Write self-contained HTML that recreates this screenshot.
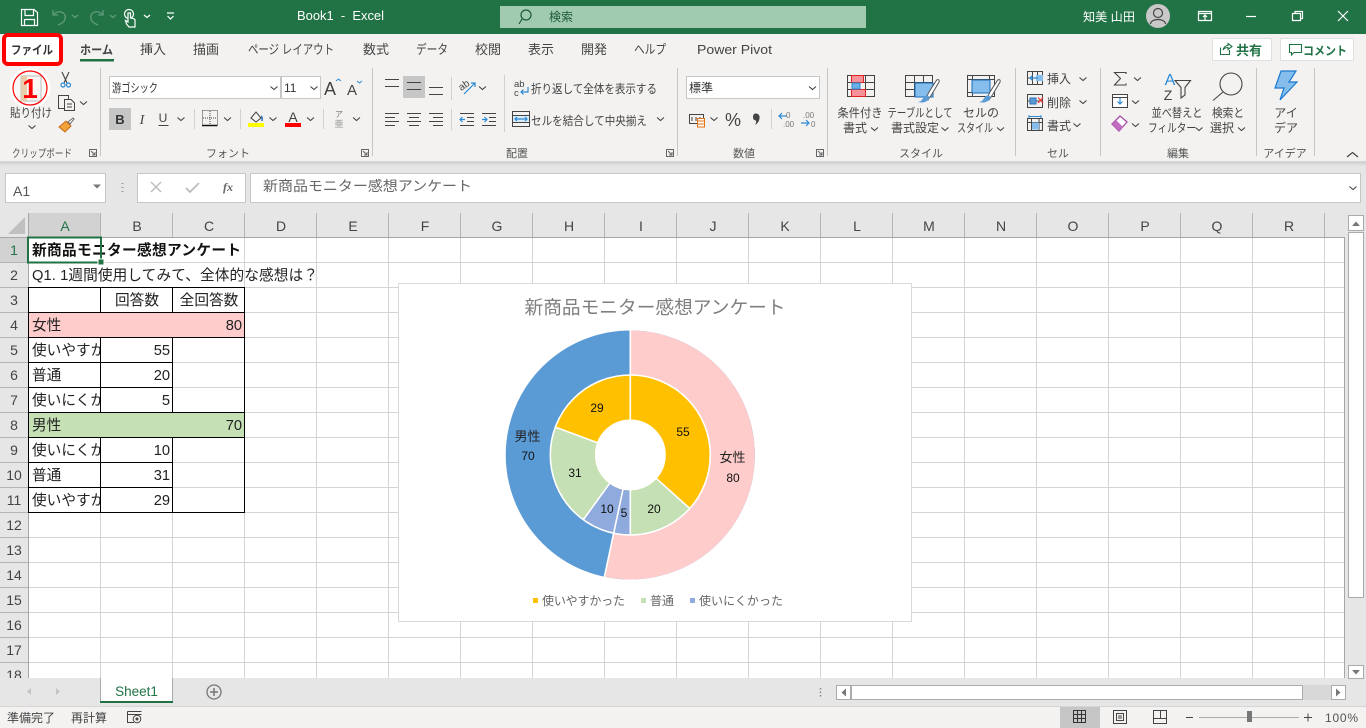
<!DOCTYPE html>
<html lang="ja"><head><meta charset="utf-8"><title>Book1 - Excel</title>
<style>
html,body{margin:0;padding:0;width:1366px;height:728px;overflow:hidden;background:#e6e6e6}
svg{display:block;position:absolute;left:0;top:0}
text{font-family:"Liberation Sans","Noto Sans CJK JP",sans-serif;font-size:12px;fill:#444}
.m{text-anchor:middle}
.c{font-size:14.67px;fill:#222}
.r{font-size:14.67px;fill:#222;text-anchor:end}
.h{font-size:14px;fill:#444;text-anchor:middle}
.g{font-size:11px;fill:#555;text-anchor:middle}
.w{fill:#fff}
.d{font-size:12px;fill:#111;text-anchor:middle}
.e{font-size:13px;fill:#222;text-anchor:middle}
.l{font-size:12px;fill:#666}
.t{font-size:13px;fill:#444}
.ln{fill:none;stroke:#444;stroke-width:1}
.ch{fill:none;stroke:#444;stroke-width:1.1}
.b{fill:none;stroke:#2b8ad6;stroke-width:1.2}
</style></head><body>
<svg width="1366" height="728" viewBox="0 0 1366 728" xmlns="http://www.w3.org/2000/svg">
<defs>
<clipPath id="ca"><rect x="29" y="338" width="71" height="175"/></clipPath>
<clipPath id="cg"><rect x="0" y="213" width="1345" height="465"/></clipPath>
<path id="v" d="M-3.5 -1.5L0 1.5L3.5 -1.5" fill="none" stroke="#444" stroke-width="1.1"/>
</defs>

<!-- backgrounds -->
<rect width="1366" height="728" fill="#e6e6e6"/>
<rect width="1366" height="34" fill="#217346"/>
<rect y="34" width="1366" height="127" fill="#f3f2f1"/>
<rect y="161" width="1366" height="3" fill="#d4d4d4"/>
<rect y="164" width="1366" height="2" fill="#e0e0e0"/>

<!-- QAT -->
<g fill="none" stroke="#fff" stroke-width="1.2">
<path d="M21.5 9.5H34L37.5 12.5V25.500H21.500Z"/><path d="M25 9.500V15.500H33.500V9.500M24.500 25V19.500H34.500V25"/>
</g>
<g fill="none" stroke="#5f9a7b" stroke-width="1.3">
<path d="M53 10V15H58M53 15C58 9 67 12 65 19C64 23 60 24 58 25"/>
<path d="M103 10V15H98M103 15C98 9 89 12 91 19C92 23 96 24 98 25"/>
<path d="M72 15L75 17.500L78 15M110 15L113 17.500L116 15"/>
</g>
<g fill="none" stroke="#fff" stroke-width="1.2">
<circle cx="129" cy="14" r="4.500"/><path d="M128 13V22L125.500 20.500L126.500 24L129 27H135V20C135 18.500 131 18 130.500 18V13Z" fill="#217346"/>
<path d="M144 15L147 17.500L150 15M167 13H174M167.500 16L170.500 19L173.500 16"/>
</g>
<text x="297" y="20" class="w" textLength="87" lengthAdjust="spacingAndGlyphs" style="font-size:13px">Book1&#160;&#160;-&#160;&#160;Excel</text>
<rect x="500" y="6" width="366" height="22" fill="#a0cbb0"/>
<g fill="none" stroke="#1c5c38" stroke-width="1.2"><circle cx="526" cy="15" r="5"/><path d="M522 19L519 24"/></g>
<text x="549" y="21" style="fill:#1e5a39">検索</text>
<text x="1083" y="21" class="w" textLength="52" lengthAdjust="spacingAndGlyphs">知美 山田</text>
<circle cx="1158" cy="16" r="12" fill="#c8c8c8"/>
<g fill="none" stroke="#444" stroke-width="1.200"><circle cx="1158" cy="13" r="4.500"/><path d="M1150.500 24C1151 18 1165 18 1165.500 24"/></g>
<g fill="none" stroke="#fff" stroke-width="1.200">
<path d="M1198.500 11.500H1211.500V20.500H1198.500ZM1198.500 13.500H1211.500M1205 20V15M1203 17L1205 15L1207 17"/>
<path d="M1246 16.500H1256"/>
<path d="M1292.500 13.500H1300.500V20.500H1292.500ZM1295 13.500V11.500H1302.500V18.500H1300.500"/>
<path d="M1338 11L1348 21M1348 11L1338 21"/>
</g>

<!-- file tab -->
<rect x="4" y="35" width="57" height="29" rx="4" fill="#fff" stroke="#f00" stroke-width="4"/>
<text x="11" y="54" style="font-weight:bold;fill:#333" textLength="42" lengthAdjust="spacingAndGlyphs">ファイル</text>
<!-- tabs -->
<text x="80" y="54" style="font-weight:bold;fill:#444" textLength="33" lengthAdjust="spacingAndGlyphs">ホーム</text>
<rect x="80" y="59" width="34" height="2.500" fill="#217346"/>
<text x="140" y="54" class="t" textLength="26" lengthAdjust="spacingAndGlyphs">挿入</text>
<text x="193" y="54" class="t" textLength="26" lengthAdjust="spacingAndGlyphs">描画</text>
<text x="248" y="54" class="t" textLength="86" lengthAdjust="spacingAndGlyphs">ページ レイアウト</text>
<text x="363" y="54" class="t" textLength="26" lengthAdjust="spacingAndGlyphs">数式</text>
<text x="416" y="54" class="t" textLength="32" lengthAdjust="spacingAndGlyphs">データ</text>
<text x="475" y="54" class="t" textLength="26" lengthAdjust="spacingAndGlyphs">校閲</text>
<text x="528" y="54" class="t" textLength="26" lengthAdjust="spacingAndGlyphs">表示</text>
<text x="581" y="54" class="t" textLength="26" lengthAdjust="spacingAndGlyphs">開発</text>
<text x="634" y="54" class="t" textLength="32" lengthAdjust="spacingAndGlyphs">ヘルプ</text>
<text x="697" y="54" class="t" textLength="75" lengthAdjust="spacingAndGlyphs">Power Pivot</text>
<!-- share/comment -->
<rect x="1212.500" y="38.500" width="59" height="22" rx="1" fill="#fff" stroke="#e1dfdd"/>
<rect x="1280.500" y="38.500" width="73" height="22" rx="1" fill="#fff" stroke="#e1dfdd"/>
<g fill="none" stroke="#217346" stroke-width="1.100">
<path d="M1220.500 47.500V54.500H1229.500V50M1223 50C1224 46.500 1226 45.500 1228 45.500V43.500L1232 46.500L1228 49.500V47.500C1226 47.500 1224 48.500 1223 50Z"/>
<path d="M1289.500 44.500H1301.500V52.500H1294L1291.500 55V52.500H1289.500Z"/>
</g>
<text x="1236" y="55" style="font-weight:bold;fill:#217346;font-size:13px" textLength="26" lengthAdjust="spacingAndGlyphs">共有</text>
<text x="1303" y="55" style="font-weight:bold;fill:#217346" textLength="44" lengthAdjust="spacingAndGlyphs">コメント</text>

<!-- ribbon separators -->
<path d="M100.500 68V156M372.500 68V156M677.500 68V156M827.500 68V156M1015.500 68V156M1100.500 68V156M1256.500 68V156M1314.500 68V156" stroke="#c8c6c4" stroke-width="1"/>
<path d="M194.500 109V129M240.500 109V129M323.500 109V129M451.500 77V100M451.500 109V130M504.500 75V132M771.500 109V129" stroke="#d2d0ce"/>
<!-- group labels -->
<text x="42" y="157" class="g" textLength="60" lengthAdjust="spacingAndGlyphs">クリップボード</text>
<text x="228" y="157" class="g">フォント</text>
<text x="517" y="157" class="g">配置</text>
<text x="744" y="157" class="g">数値</text>
<text x="921" y="157" class="g">スタイル</text>
<text x="1058" y="157" class="g">セル</text>
<text x="1178" y="157" class="g">編集</text>
<text x="1285" y="157" class="g">アイデア</text>
<g fill="none" stroke="#666"><path d="M89.500 149.500H96.500V156.500H89.500ZM91 151L95 155M95 152V155H92"/>
<path d="M361.500 149.500H368.500V156.500H361.500ZM363 151L367 155M367 152V155H364"/>
<path d="M666.500 149.500H673.500V156.500H666.500ZM668 151L672 155M672 152V155H669"/>
<path d="M816.500 149.500H823.500V156.500H816.500ZM818 151L822 155M822 152V155H819"/></g>
<path d="M1347 157L1352.500 152.500L1358 157" fill="none" stroke="#444" stroke-width="1.200"/>

<!-- clipboard -->
<rect x="21" y="76" width="20" height="25" fill="#f7f3ec" stroke="#888"/>
<rect x="21" y="76" width="6" height="25" fill="#d8a566"/>
<circle cx="30" cy="88" r="17" fill="#fff" opacity=".45"/>
<circle cx="30" cy="88" r="18.500" fill="none" stroke="#fff" stroke-width="3.500"/>
<circle cx="30" cy="88" r="17" fill="none" stroke="#f00" stroke-width="1.200"/>
<text x="30" y="98" class="m" style="font-size:28px;font-weight:bold;fill:#f00">1</text>
<text x="31" y="117" class="m" textLength="42" lengthAdjust="spacingAndGlyphs">貼り付け</text>
<use href="#v" x="32" y="127"/>
<g fill="none" stroke="#444" stroke-width="1.100"><path d="M62 72L67 83M69 72L64 83"/></g>
<circle cx="63" cy="85" r="2" fill="none" stroke="#2b8ad6" stroke-width="1.200"/><circle cx="68.500" cy="85" r="2" fill="none" stroke="#2b8ad6" stroke-width="1.200"/>
<g class="ln" fill="none" stroke="#444"><path d="M64.500 108.500H58.500V95.500H68.500V99"/><path d="M64.500 99.500H71L74.500 103V110.500H64.500Z" fill="#f3f2f1"/><path d="M67 104H72M67 107H72"/></g>
<use href="#v" x="83.500" y="103"/>
<path d="M59 127L66 121L71 126L65 132Z" fill="#f2a33a" stroke="#c8691a"/><path d="M68 122L73 118L74 119L70 124Z" fill="#fff" stroke="#666"/>

<!-- font -->
<rect x="109.500" y="76.500" width="171" height="22" fill="#fff" stroke="#c6c6c6"/>
<rect x="281.500" y="76.500" width="39" height="22" fill="#fff" stroke="#c6c6c6"/>
<text x="112" y="92" style="fill:#333" textLength="46" lengthAdjust="spacingAndGlyphs">游ゴシック</text>
<text x="284" y="92" style="fill:#333">11</text>
<use href="#v" x="274" y="88"/><use href="#v" x="314" y="88"/>
<text x="324" y="95" style="font-size:18px;fill:#444">A</text>
<path d="M336 81L338.500 79L341 81" fill="none" stroke="#2b8ad6"/>
<text x="347" y="95" style="font-size:15px;fill:#444">A</text>
<path d="M357 81L359.500 83L362 81" fill="none" stroke="#2b8ad6"/>
<rect x="109" y="108" width="22" height="22" fill="#c6c6c6"/>
<text x="120" y="124" class="m" style="font-weight:bold;font-size:13px;fill:#333">B</text>
<text x="142" y="124" class="m" style="font-style:italic;font-family:'Liberation Serif',serif;font-size:14px">I</text>
<text x="163" y="122" class="m" style="font-size:12px">U</text>
<path d="M158.500 125.500H168.500" stroke="#444"/>
<use href="#v" x="181" y="119"/>
<path d="M202.500 110.500H217.500V125.500M202.500 110.500V125.500M210 111V125M203 118H217" fill="none" stroke="#444" stroke-dasharray="1 1"/>
<path d="M202 125.500H217.500" stroke="#111" stroke-width="1.500"/>
<use href="#v" x="227.500" y="119"/>
<path d="M251 118L256 112L261 118L256 122Z" fill="none" stroke="#444"/><path d="M261 116C263 117 262 120 262 121" stroke="#2b6fb5" stroke-width="1.500" fill="none"/>
<rect x="248" y="123" width="16" height="4" fill="#ff0"/>
<use href="#v" x="273" y="119"/>
<text x="293" y="122" class="m" style="font-size:14px">A</text>
<rect x="285" y="123" width="16" height="4" fill="#f00"/>
<use href="#v" x="310.500" y="119"/>
<text x="339" y="117" class="m" style="font-size:8px;fill:#777">ア</text>
<text x="339" y="127" class="m" style="font-size:9px;fill:#999">亜</text>
<use href="#v" x="356.500" y="119"/>

<!-- alignment -->
<rect x="403" y="76" width="22" height="22" fill="#c6c6c6"/>
<path d="M385 79.500H399M385 86.500H399M407 82.500H421M407 89.500H421M429 87.500H443M429 94.500H443M385 113.500H399M385 117.500H395M385 121.500H399M385 125.500H395M407 113.500H421M409 117.500H419M407 121.500H421M409 125.500H419M429 113.500H443M433 117.500H443M429 121.500H443M433 125.500H443" stroke="#444" fill="none"/>
<text x="459" y="88" transform="rotate(-35 465 86)" style="font-size:10px">ab</text>
<path d="M464 94L475 83M471 83H475V87" class="b"/>
<use href="#v" x="482.500" y="88"/>
<path d="M460 113.500H474M460 125.500H474M467 117.500H474M467 121.500H474" stroke="#444"/><path d="M465 119.500H460M462.500 117L460 119.500L462.500 122" class="b"/>
<path d="M482 113.500H496M482 125.500H496M489 117.500H496M489 121.500H496" stroke="#444"/><path d="M482 119.500H487M484.500 117L487 119.500L484.500 122" class="b"/>
<text x="514" y="87" style="font-size:9.500px">ab</text><text x="514" y="96" style="font-size:9.500px">c</text>
<path d="M528 87V92H521M523.500 89.500L521 92L523.500 94.500" class="b"/>
<text x="531" y="93" textLength="126" lengthAdjust="spacingAndGlyphs">折り返して全体を表示する</text>
<rect x="512.500" y="111.500" width="17" height="15" fill="none" stroke="#444"/><path d="M513 115.500H529M513 122.500H529" stroke="#444"/><rect x="513" y="116" width="16" height="6" fill="#d7ebf9"/>
<path d="M515 119H527M517 117L515 119L517 121M525 117L527 119L525 121" class="b"/>
<text x="531" y="125" textLength="116" lengthAdjust="spacingAndGlyphs">セルを結合して中央揃え</text>
<use href="#v" x="660.500" y="119"/>

<!-- number -->
<rect x="686.500" y="76.500" width="133" height="22" fill="#fff" stroke="#c6c6c6"/>
<text x="689" y="92" style="fill:#333">標準</text>
<use href="#v" x="812.500" y="88"/>
<rect x="689.500" y="114.500" width="14" height="9" fill="none" stroke="#444"/><path d="M692 117V121M696 117V121M700 117V121" stroke="#444"/>
<rect x="697.500" y="118.500" width="7" height="8.500" fill="#fff" stroke="#e3720f"/><path d="M698 121H704M698 124H704" stroke="#e3720f"/>
<use href="#v" x="714" y="119"/>
<text x="733" y="126" class="m" style="font-size:18px">%</text>
<path d="M755.500 113.500C759 113.500 760 116 759.500 118.500C759 121.500 757.500 123.500 755 125C756 123 756.500 121.500 756 120.500C754 120.500 753 119 753 117C753 115 754 113.500 755.500 113.500Z" fill="#444"/>
<path d="M779 116H787M782 113L779 116L782 119" class="b"/>
<text x="786" y="118" style="font-size:8px;fill:#777">0</text><text x="783" y="127" style="font-size:8px;fill:#777">.00</text>
<text x="803" y="118" style="font-size:8px;fill:#777">.00</text><text x="811" y="127" style="font-size:8px;fill:#777">0</text>
<path d="M801 123H809M806 120L809 123L806 126" class="b"/>

<!-- styles -->
<g stroke="#444" fill="none">
<rect x="847.500" y="75.500" width="27" height="21"/><path d="M847.500 82.500H875M847.500 89.500H875M856.500 75V97M865.500 75V97"/>
<rect x="851.500" y="75.500" width="12" height="7" fill="#f6939a" stroke="#d22"/>
<rect x="851.500" y="89.500" width="14" height="7" fill="#f6939a" stroke="#d22"/>
<rect x="852" y="83" width="8" height="6" fill="#6ab0e6" stroke="#2b8ad6"/>
<rect x="905.500" y="75.500" width="27" height="21"/><path d="M905.500 82.500H933M905.500 89.500H933M914.500 75V97M923.500 75V97"/>
<rect x="915" y="83" width="18" height="14" fill="#85bdec" stroke="#1c6ab5"/>
<rect x="967.500" y="75.500" width="27" height="21"/><path d="M967.500 79.500H995M967.500 92.500H995M972.500 75V97M989.500 75V97"/>
<rect x="972" y="80" width="18" height="13" fill="#85bdec" stroke="#1c6ab5"/>
</g>
<g><path d="M925 100L929 92L936 81C937 79 940 79 939 82L932 94L928 100Z" fill="#fff" stroke="#555"/><path d="M918 102C922 102 923 97 925 96C927 94 931 97 929 99C926 103 921 103 918 102Z" fill="#5b9bd5"/>
<path d="M986 100L990 92L997 81C998 79 1001 79 1000 82L993 94L989 100Z" fill="#fff" stroke="#555"/><path d="M979 102C983 102 984 97 986 96C988 94 992 97 990 99C987 103 982 103 979 102Z" fill="#5b9bd5"/></g>
<text x="860" y="117" class="m" textLength="45" lengthAdjust="spacingAndGlyphs">条件付き</text>
<text x="855" y="132" class="m">書式</text><use href="#v" x="874.500" y="129"/>
<text x="920" y="117" class="m" textLength="65" lengthAdjust="spacingAndGlyphs">テーブルとして</text>
<text x="915" y="132" class="m">書式設定</text><use href="#v" x="945" y="129"/>
<text x="981" y="117" class="m">セルの</text>
<text x="975" y="132" class="m" textLength="36" lengthAdjust="spacingAndGlyphs">スタイル</text><use href="#v" x="1000.500" y="129"/>

<!-- cells -->
<g stroke="#444" fill="none">
<rect x="1027.500" y="71.500" width="15" height="13"/><path d="M1027 78H1043M1032.500 71V85M1037.500 71V85"/>
<rect x="1027.500" y="94.500" width="15" height="13"/><path d="M1027 101H1043"/>
<rect x="1027.500" y="118.500" width="15" height="12"/><path d="M1027 122.500H1043M1031.500 118V131M1039 118V131"/>
</g>
<rect x="1036" y="75" width="7" height="6" fill="#85bdec"/><path d="M1038 78H1030M1032.500 75.500L1030 78L1032.500 80.500" fill="none" stroke="#2b8ad6" stroke-width="1.200"/>
<rect x="1030" y="98" width="6" height="6" fill="#5b9bd5" stroke="#2b6fb5"/><path d="M1038 97.500L1043 103M1043 97.500L1038 103" stroke="#e33" stroke-width="1.200"/>
<rect x="1032" y="122.500" width="7" height="7" fill="#85bdec"/><path d="M1029 116.500H1041M1029 115V118M1041 115V118" stroke="#2b8ad6" fill="none"/>
<text x="1047" y="83">挿入</text><use href="#v" x="1083" y="79"/>
<text x="1047" y="107">削除</text><use href="#v" x="1083" y="102"/>
<text x="1047" y="130">書式</text><use href="#v" x="1077" y="125"/>

<!-- editing -->
<path d="M1126 74V72.500H1114.500L1120.500 78.500L1114.500 85H1126V83.500" fill="none" stroke="#444" stroke-width="1.100"/>
<use href="#v" x="1137.500" y="79"/>
<rect x="1112.500" y="94.500" width="15" height="13" fill="#fff" stroke="#444"/><path d="M1120 97V104M1117.500 101.500L1120 104L1122.500 101.500" class="b"/>
<path d="M1112.500 95V97.500H1127.500" stroke="#444" fill="none"/>
<use href="#v" x="1135.500" y="102"/>
<path d="M1112 124L1120 116L1127 122L1119 131Z" fill="#fff" stroke="#a64ca6" stroke-width="1.300"/><path d="M1112 124L1116 120L1123 127L1119 131Z" fill="#c06cc0"/>
<use href="#v" x="1135.500" y="125"/>
<text x="1170" y="85" class="m" style="font-size:16px;fill:#2b8ad6">A</text>
<text x="1168" y="100" class="m" style="font-size:14px">Z</text>
<path d="M1175 80.500H1190.500L1185 87.500V95L1181 98V87.500Z" fill="none" stroke="#444" stroke-width="1.100"/>
<text x="1177" y="117" class="m" textLength="51" lengthAdjust="spacingAndGlyphs">並べ替えと</text>
<text x="1172" y="132" class="m" textLength="48" lengthAdjust="spacingAndGlyphs">フィルター</text><use href="#v" x="1199" y="129"/>
<circle cx="1231" cy="84" r="11" fill="none" stroke="#444" stroke-width="1.100"/><path d="M1223 92L1213 100.500" stroke="#444" stroke-width="1.100"/>
<text x="1228" y="117" class="m" textLength="32" lengthAdjust="spacingAndGlyphs">検索と</text>
<text x="1222" y="132" class="m">選択</text><use href="#v" x="1241.500" y="129"/>
<path d="M1281 71H1296L1289 82H1297L1280 100L1284 88H1275Z" fill="#85bdec" stroke="#1c7ad0" stroke-width="1.200"/>
<text x="1286" y="117" class="m">アイ</text><text x="1286" y="132" class="m">デア</text>

<!-- formula bar -->
<rect x="5.500" y="173.500" width="100" height="29" fill="#fff" stroke="#c6c6c6"/>
<text x="13" y="196" style="font-size:14px;fill:#555">A1</text>
<path d="M93 184.500H101L97 188.500Z" fill="#777"/>
<path d="M122.500 183V184M122.500 187V188M122.500 191V192" stroke="#999" stroke-width="2"/>
<rect x="137.500" y="173.500" width="108" height="29" fill="#fff" stroke="#c6c6c6"/>
<rect x="250.500" y="173.500" width="1110" height="29" fill="#fff" stroke="#c6c6c6"/>
<path d="M151 182L161 192M161 182L151 192" stroke="#bbb" stroke-width="1.300"/>
<path d="M186 188L190 192L199 183" stroke="#bbb" stroke-width="1.800" fill="none"/>
<text x="228" y="191" class="m" style="font-family:'Liberation Serif',serif;font-style:italic;font-weight:bold;fill:#666;font-size:12px">fx</text>
<text x="263" y="191" style="font-size:14px;fill:#666" textLength="209" lengthAdjust="spacingAndGlyphs">新商品モニター感想アンケート</text>
<use href="#v" x="1353" y="188"/>

<!-- column / row headers -->
<rect x="0" y="213" width="1345" height="25" fill="#e6e6e6"/>
<rect x="29" y="213" width="72" height="25" fill="#d2d2d2"/>
<rect x="0" y="238" width="29" height="440" fill="#e6e6e6"/>
<rect x="0" y="238" width="29" height="25" fill="#d2d2d2"/>
<path d="M8 234L25 217V234Z" fill="#c0c0c0"/>
<!-- sheet -->
<rect x="29" y="238" width="1315" height="440" fill="#fff"/>
<g clip-path="url(#cg)">
<path d="M100.500 238V678M172.500 238V678M244.500 238V678M316.500 238V678M388.500 238V678M460.500 238V678M532.500 238V678M604.500 238V678M676.500 238V678M748.500 238V678M820.500 238V678M892.500 238V678M964.500 238V678M1036.500 238V678M1108.500 238V678M1180.500 238V678M1252.500 238V678M1324.500 238V678M29 262.500H1344M29 287.500H1344M29 312.500H1344M29 337.500H1344M29 362.500H1344M29 387.500H1344M29 412.500H1344M29 437.500H1344M29 462.500H1344M29 487.500H1344M29 512.500H1344M29 537.500H1344M29 562.500H1344M29 587.500H1344M29 612.500H1344M29 637.500H1344M29 662.500H1344" stroke="#d4d4d4" fill="none"/>
<path d="M100.500 213V238M172.500 213V238M244.500 213V238M316.500 213V238M388.500 213V238M460.500 213V238M532.500 213V238M604.500 213V238M676.500 213V238M748.500 213V238M820.500 213V238M892.500 213V238M964.500 213V238M1036.500 213V238M1108.500 213V238M1180.500 213V238M1252.500 213V238M1324.500 213V238M0 262.500H29M0 287.500H29M0 312.500H29M0 337.500H29M0 362.500H29M0 387.500H29M0 412.500H29M0 437.500H29M0 462.500H29M0 487.500H29M0 512.500H29M0 537.500H29M0 562.500H29M0 587.500H29M0 612.500H29M0 637.500H29M0 662.500H29" stroke="#b4b4b4" fill="none"/>
<path d="M0 237.500H1344.500V678M28.500 213V678M29 678.500H1345" stroke="#a6a6a6" fill="none"/>
<text x="65" y="231" class="h" style="fill:#217346">A</text><text x="137" y="231" class="h">B</text><text x="209" y="231" class="h">C</text><text x="281" y="231" class="h">D</text><text x="353" y="231" class="h">E</text><text x="425" y="231" class="h">F</text><text x="497" y="231" class="h">G</text><text x="569" y="231" class="h">H</text><text x="641" y="231" class="h">I</text><text x="713" y="231" class="h">J</text><text x="785" y="231" class="h">K</text><text x="857" y="231" class="h">L</text><text x="929" y="231" class="h">M</text><text x="1001" y="231" class="h">N</text><text x="1073" y="231" class="h">O</text><text x="1145" y="231" class="h">P</text><text x="1217" y="231" class="h">Q</text><text x="1289" y="231" class="h">R</text>
<text x="14" y="255" class="h" style="fill:#217346">1</text><text x="14" y="280" class="h">2</text><text x="14" y="305" class="h">3</text><text x="14" y="330" class="h">4</text><text x="14" y="355" class="h">5</text><text x="14" y="380" class="h">6</text><text x="14" y="405" class="h">7</text><text x="14" y="430" class="h">8</text><text x="14" y="455" class="h">9</text><text x="14" y="480" class="h">10</text><text x="14" y="505" class="h">11</text><text x="14" y="530" class="h">12</text><text x="14" y="555" class="h">13</text><text x="14" y="580" class="h">14</text><text x="14" y="605" class="h">15</text><text x="14" y="630" class="h">16</text><text x="14" y="655" class="h">17</text><text x="14" y="680" class="h">18</text>
</g>

<!-- table fills -->
<rect x="29" y="313" width="215" height="24" fill="#ffcccc"/>
<rect x="29" y="413" width="215" height="24" fill="#c5e0b4"/>
<rect x="29" y="263" width="215" height="24" fill="#fff"/>
<rect x="101" y="238" width="143" height="24" fill="#fff"/>
<path d="M28.500 287.500H244.500V512.500H28.500ZM100.500 287V312M172.500 287V312M100.500 337V412M172.500 337V412M100.500 437V512M172.500 437V512M28 312.500H245M28 337.500H245M28 362.500H173M28 387.500H173M28 412.500H245M28 437.500H245M28 462.500H173M28 487.500H173" stroke="#000" fill="none"/>
<text x="32" y="255" class="c" style="font-weight:bold;fill:#111" textLength="209">新商品モニター感想アンケート</text>
<text x="32" y="280" class="c" textLength="286">Q1. 1週間使用してみて、全体的な感想は？</text>
<text x="137" y="305" class="c m">回答数</text>
<text x="209" y="305" class="c m">全回答数</text>
<text x="32" y="330" class="c">女性</text><text x="242" y="330" class="r">80</text>
<text x="32" y="430" class="c">男性</text><text x="242" y="430" class="r">70</text>
<g clip-path="url(#ca)">
<text x="32" y="355" class="c">使いやすかった</text><text x="32" y="380" class="c">普通</text><text x="32" y="405" class="c">使いにくかった</text>
<text x="32" y="455" class="c">使いにくかった</text><text x="32" y="480" class="c">普通</text><text x="32" y="505" class="c">使いやすかった</text>
</g>
<text x="170" y="355" class="r">55</text><text x="170" y="380" class="r">20</text><text x="170" y="405" class="r">5</text>
<text x="170" y="455" class="r">10</text><text x="170" y="480" class="r">31</text><text x="170" y="505" class="r">29</text>
<!-- selection -->
<rect x="28" y="237.500" width="73" height="25" fill="none" stroke="#217346" stroke-width="2"/>
<rect x="98" y="259" width="6" height="6" fill="#217346" stroke="#fff"/>

<!-- chart -->
<rect x="398.500" y="283.500" width="513" height="338" fill="#fff" stroke="#d9d9d9"/>
<text x="655" y="314" class="m" style="font-size:18.670px;fill:#7f7f7f" textLength="261">新商品モニター感想アンケート</text>
<g fill="none" transform="rotate(-90 630.300 455)">
<circle cx="630.300" cy="455" r="102.300" stroke="#5b9bd5" stroke-width="44.500"/>
<circle cx="630.300" cy="455" r="102.300" stroke="#ffcccc" stroke-width="44.500" pathLength="360" stroke-dasharray="192 168"/>
<circle cx="630.300" cy="455" r="57.750" stroke="#ffc000" stroke-width="44.500"/>
<circle cx="630.300" cy="455" r="57.750" stroke="#c5e0b4" stroke-width="44.500" pathLength="360" stroke-dasharray="48 312" stroke-dashoffset="-132"/>
<circle cx="630.300" cy="455" r="57.750" stroke="#8faadc" stroke-width="44.500" pathLength="360" stroke-dasharray="36 324" stroke-dashoffset="-180"/>
<circle cx="630.300" cy="455" r="57.750" stroke="#c5e0b4" stroke-width="44.500" pathLength="360" stroke-dasharray="74.400 285.600" stroke-dashoffset="-216"/>
</g>
<circle cx="630.300" cy="455" r="80" fill="none" stroke="#fff" stroke-width="1.600"/>
<g stroke="#fff" stroke-width="1.600">
<path d="M630.300 330V420" />
<path d="M630.300 375V420" transform="rotate(132 630.300 455)"/>
<path d="M630.300 375V420" transform="rotate(180 630.300 455)"/>
<path d="M630.300 330V420" transform="rotate(192 630.300 455)"/>
<path d="M630.300 375V420" transform="rotate(216 630.300 455)"/>
<path d="M630.300 375V420" transform="rotate(290.400 630.300 455)"/>
</g>
<text x="527.500" y="441" class="e">男性</text><text x="528" y="460" class="d">70</text>
<text x="732.500" y="462" class="e">女性</text><text x="733" y="482" class="d">80</text>
<text x="683" y="436" class="d">55</text><text x="654" y="513" class="d">20</text>
<text x="624" y="517" class="d">5</text><text x="607" y="513" class="d">10</text>
<text x="575" y="477" class="d">31</text><text x="597" y="412" class="d">29</text>
<rect x="533" y="598" width="5" height="5" fill="#ffc000"/><text x="542" y="605" class="l" textLength="83">使いやすかった</text>
<rect x="641" y="598" width="5" height="5" fill="#c5e0b4"/><text x="650" y="605" class="l">普通</text>
<rect x="690" y="598" width="5" height="5" fill="#8faadc"/><text x="699" y="605" class="l" textLength="84">使いにくかった</text>

<!-- vertical scrollbar -->
<rect x="1345" y="213" width="21" height="467" fill="#e6e6e6"/>
<rect x="1348.500" y="215.500" width="15" height="15" fill="#fff" stroke="#ababab"/>
<path d="M1352 226H1360L1356 221.500Z" fill="#777"/>
<rect x="1348.500" y="232.500" width="15" height="365" fill="#fff" stroke="#ababab"/>
<rect x="1348.500" y="665.500" width="15" height="13" fill="#fff" stroke="#ababab"/>
<path d="M1352 670H1360L1356 674.500Z" fill="#777"/>

<!-- sheet tabs -->
<rect x="0" y="679" width="1366" height="27" fill="#e6e6e6"/>
<rect x="100" y="678" width="73" height="25" fill="#fff"/>
<rect x="100" y="701" width="73" height="2" fill="#217346"/>
<path d="M100.500 678V701M172.500 678V701" stroke="#ababab"/>
<text x="136.500" y="696" class="m" style="font-size:13.500px;fill:#217346">Sheet1</text>
<path d="M31 688V695L27 691.500ZM56 688V695L60 691.500Z" fill="#c4c4c4"/>
<circle cx="214" cy="692" r="7" fill="none" stroke="#777" stroke-width="1.300"/><path d="M210 692H218M214 688V696" stroke="#777" stroke-width="1.500"/>
<path d="M820.500 688V689.500M820.500 691.500V693M820.500 695V696.500" stroke="#888" stroke-width="1.500"/>
<rect x="836.500" y="685.500" width="14" height="14" fill="#fff" stroke="#ababab"/><path d="M846 688.500V696.500L841.500 692.500Z" fill="#777"/>
<rect x="851.500" y="685.500" width="451" height="14" fill="#fff" stroke="#ababab"/>
<rect x="1303" y="685" width="28" height="15" fill="#d8d8d8"/>
<rect x="1331.500" y="685.500" width="14" height="14" fill="#fff" stroke="#ababab"/><path d="M1336 688.500V696.500L1340.500 692.500Z" fill="#777"/>

<!-- status bar -->
<rect x="0" y="706" width="1366" height="22" fill="#f3f2f1"/>
<rect x="0" y="706" width="1366" height="1" fill="#d6d6d6"/>
<text x="7" y="722" textLength="48">準備完了</text>
<text x="71" y="722" textLength="36">再計算</text>
<path d="M127.500 711.500H141.500M127.500 714.500H141.500M127.500 711.500V722.500H134" stroke="#444" fill="none"/><circle cx="137" cy="719" r="3.800" fill="none" stroke="#444"/><circle cx="137" cy="719" r="1.500" fill="#444"/>
<rect x="1060" y="707" width="40" height="21" fill="#c6c6c6"/>
<path d="M1073.500 710.500H1085.500V722.500H1073.500ZM1073.500 714.500H1085.500M1073.500 718.500H1085.500M1077.500 710.500V722.500M1081.500 710.500V722.500" fill="none" stroke="#333"/>
<path d="M1113.500 710.500H1126.500V723.500H1113.500ZM1116.500 713.500H1123.500V720.500H1116.500ZM1118 716H1122M1118 718H1122" fill="none" stroke="#444"/>
<path d="M1153.500 710.500H1166.500V723.500H1153.500ZM1153.500 718.500H1166.500M1160.500 710.500V718.500" fill="none" stroke="#444"/>
<path d="M1186 717.500H1193M1304 717.500H1312M1308 713.500V721.500" stroke="#444" fill="none"/>
<path d="M1199 717.500H1299" stroke="#aaa"/>
<rect x="1247" y="711" width="5" height="11" fill="#777"/>
<text x="1325" y="722" textLength="33" style="fill:#555">100%</text>
</svg>
</body></html>
